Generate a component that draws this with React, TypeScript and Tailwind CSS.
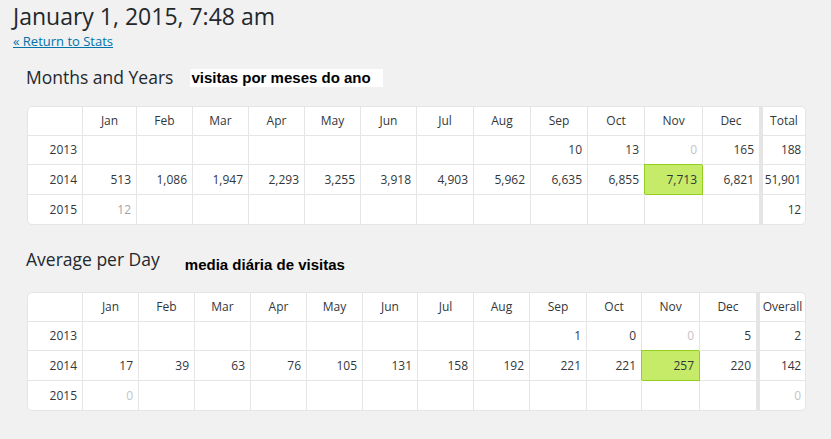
import React from "react";

type Cell = { v: string; t?: "light" | "lighter" | "hl" };

const MONTHS = ["Jan", "Feb", "Mar", "Apr", "May", "Jun", "Jul", "Aug", "Sep", "Oct", "Nov", "Dec"];

const e: Cell = { v: "" };

const table1 = {
  widths: [55, 54, 56, 56, 56, 56, 56, 57, 57, 57, 57, 58, 56],
  lastW: 42,
  lastLabel: "Total",
  rows: [
    {
      y: "2013",
      cells: [e, e, e, e, e, e, e, e, { v: "10" }, { v: "13" }, { v: "0", t: "lighter" as const }, { v: "165" }],
      total: { v: "188" } as Cell,
    },
    {
      y: "2014",
      cells: [
        { v: "513" }, { v: "1,086" }, { v: "1,947" }, { v: "2,293" }, { v: "3,255" }, { v: "3,918" },
        { v: "4,903" }, { v: "5,962" }, { v: "6,635" }, { v: "6,855" }, { v: "7,713", t: "hl" as const }, { v: "6,821" },
      ],
      total: { v: "51,901" } as Cell,
    },
    {
      y: "2015",
      cells: [{ v: "12", t: "light" as const }, e, e, e, e, e, e, e, e, e, e, e],
      total: { v: "12" } as Cell,
    },
  ],
};

const table2 = {
  widths: [55, 56, 56, 56, 56, 56, 55, 56, 56, 57, 55, 58, 56],
  lastW: 45,
  lastLabel: "Overall",
  rows: [
    {
      y: "2013",
      cells: [e, e, e, e, e, e, e, e, { v: "1" }, { v: "0" }, { v: "0", t: "lighter" as const }, { v: "5" }],
      total: { v: "2" } as Cell,
    },
    {
      y: "2014",
      cells: [
        { v: "17" }, { v: "39" }, { v: "63" }, { v: "76" }, { v: "105" }, { v: "131" },
        { v: "158" }, { v: "192" }, { v: "221" }, { v: "221" }, { v: "257", t: "hl" as const }, { v: "220" },
      ],
      total: { v: "142" } as Cell,
    },
    {
      y: "2015",
      cells: [{ v: "0", t: "lighter" as const }, e, e, e, e, e, e, e, e, e, e, e],
      total: { v: "0", t: "lighter" } as Cell,
    },
  ],
};

function valueClass(c: Cell) {
  if (c.t === "light") return "text-[#a0a5aa]";
  if (c.t === "lighter") return "text-[#c3c4c7]";
  return "text-[#32373c]";
}

function StatsTable({ data }: { data: typeof table1 }) {
  const { widths, lastW, lastLabel, rows } = data;
  return (
    <div className="w-[779px] rounded-[5px] border border-[#e5e5e5] bg-white overflow-hidden text-[12px] text-[#32373c]">
      <div className="flex h-[29px] border-b border-[#e5e5e5]">
        <div style={{ width: widths[0] }} className="shrink-0 border-r border-[#e5e5e5]" />
        {MONTHS.map((m, i) => (
          <div
            key={m}
            style={{ width: widths[i + 1] }}
            className={
              "shrink-0 flex items-center justify-center " + (i < 11 ? "border-r border-[#e5e5e5]" : "")
            }
          >
            {m}
          </div>
        ))}
        <div className="w-[4px] shrink-0 bg-[#e5e5e5]" />
        <div style={{ width: lastW }} className="shrink-0 flex items-center justify-center whitespace-nowrap">
          {lastLabel}
        </div>
      </div>
      {rows.map((r, ri) => (
        <div
          key={r.y}
          className={"flex " + (ri === 1 ? "h-[30px] " : "h-[29px] ") + (ri < rows.length - 1 ? "border-b border-[#e5e5e5]" : "")}
        >
          <div
            style={{ width: widths[0] }}
            className="shrink-0 border-r border-[#e5e5e5] flex items-center justify-end pr-[5px]"
          >
            {r.y}
          </div>
          {r.cells.map((c, i) => {
            const hl = c.t === "hl";
            return (
              <div
                key={i}
                style={{ width: widths[i + 1] }}
                className={
                  "shrink-0 flex items-center justify-end pr-[5px] " +
                  (i < 11 ? "border-r " : "") +
                  (hl
                    ? "relative -mb-px border-b border-[#93cf1e] border-r-[#93cf1e] bg-[#c6eb69] shadow-[-1px_-1px_0_0_#93cf1e] "
                    : "border-[#e5e5e5] ") +
                  valueClass(c)
                }
              >
                {c.v}
              </div>
            );
          })}
          <div className="w-[4px] shrink-0 bg-[#e5e5e5]" />
          <div
            style={{ width: lastW }}
            className={"shrink-0 flex items-center justify-end pr-[4px] whitespace-nowrap tracking-[-0.2px] " + valueClass(r.total)}
          >
            {r.total.v}
          </div>
        </div>
      ))}
    </div>
  );
}

export default function App() {
  return (
    <div
      className="min-h-screen bg-[#f1f1f1] pl-[13px] pb-[40px] overflow-hidden"
      style={{ fontFamily: '"Open Sans", "Noto Sans", sans-serif' }}
    >
      <h1 className="text-[23px] leading-[32px] font-normal text-[#23282d] pt-0">January 1, 2015, 7:48 am</h1>
      <a href="#" className="block mt-0 text-[13px] leading-[18px] text-[#0073aa] underline w-fit">
        « Return to Stats
      </a>

      <section className="pl-[13px] pt-[15px]">
        <div className="flex items-center h-[24px]">
          <h2 className="text-[17.5px] leading-[24px] font-normal text-[#23282d]">Months and Years</h2>
          <span
            className="ml-[17px] mt-[1px] bg-white h-[18px] w-[193px] pl-[1px] text-[15px] leading-[18px] font-bold text-black"
            style={{ fontFamily: '"Liberation Sans", Arial, sans-serif' }}
          >
            visitas por meses do ano
          </span>
        </div>
        <div className="mt-[17px] pl-[1px]">
          <StatsTable data={table1} />
        </div>
      </section>

      <section className="pl-[13px] pt-[22px]">
        <div className="flex items-center h-[24px]">
          <h2 className="text-[17.5px] leading-[24px] font-normal text-[#23282d]">Average per Day</h2>
          <span
            className="ml-[25px] mt-[12px] text-[15px] leading-[18px] font-bold text-black"
            style={{ fontFamily: '"Liberation Sans", Arial, sans-serif' }}
          >
            media diária de visitas
          </span>
        </div>
        <div className="mt-[21px] pl-[1px]">
          <StatsTable data={table2} />
        </div>
      </section>
    </div>
  );
}
